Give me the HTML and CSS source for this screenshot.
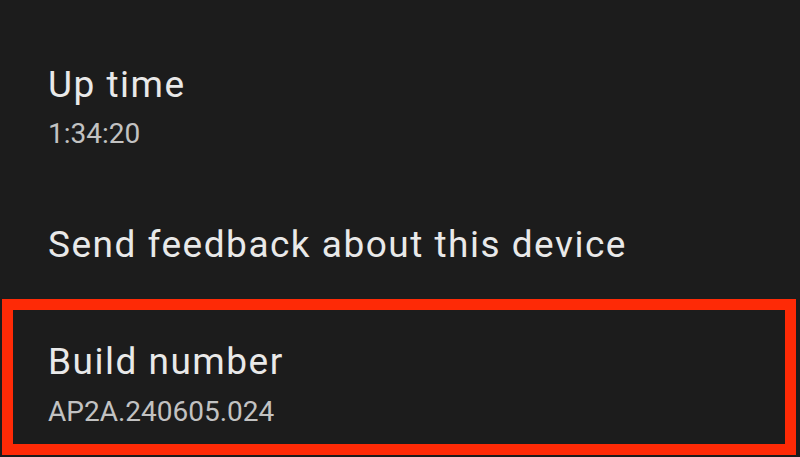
FILE: index.html
```html
<!DOCTYPE html>
<html lang="en">
<head>
<meta charset="utf-8">
<title>About phone</title>
<link rel="stylesheet" href="styles.css">
</head>
<body>
<main class="list">
  <div class="item item-first">
    <div class="title">Up time</div>
    <div class="summary">1:34:20</div>
  </div>
  <div class="item item-single">
    <div class="title">Send feedback about this device</div>
  </div>
  <div class="item item-highlight">
    <div class="title">Build number</div>
    <div class="summary">AP2A.240605.024</div>
  </div>
</main>
</body>
</html>
```
FILE: styles.css
```css
html, body {
  margin: 0;
  padding: 0;
  background: #1c1c1c;
}
body {
  width: 800px;
  height: 457px;
  overflow: hidden;
  font-family: Roboto, "Noto Sans", sans-serif;
}
.list {
  display: flex;
  flex-direction: column;
  padding-top: 63px;
}
.item {
  padding-left: 48px;
}
.title {
  font-size: 37px;
  line-height: 44px;
  letter-spacing: 1.5px;
  color: #e9e9e9;
}
.summary {
  font-size: 28px;
  line-height: 36px;
  color: #c2c2c2;
  margin-top: 9px;
}
.item-single {
  margin-top: 71px;
}
.item-highlight {
  box-sizing: border-box;
  margin: 32px 4px 0 2px;
  height: 156px;
  border: 11px solid #fe2a06;
  padding: 30px 0 0 35px;
}
.item-highlight .summary {
  margin-top: 10px;
}
```
